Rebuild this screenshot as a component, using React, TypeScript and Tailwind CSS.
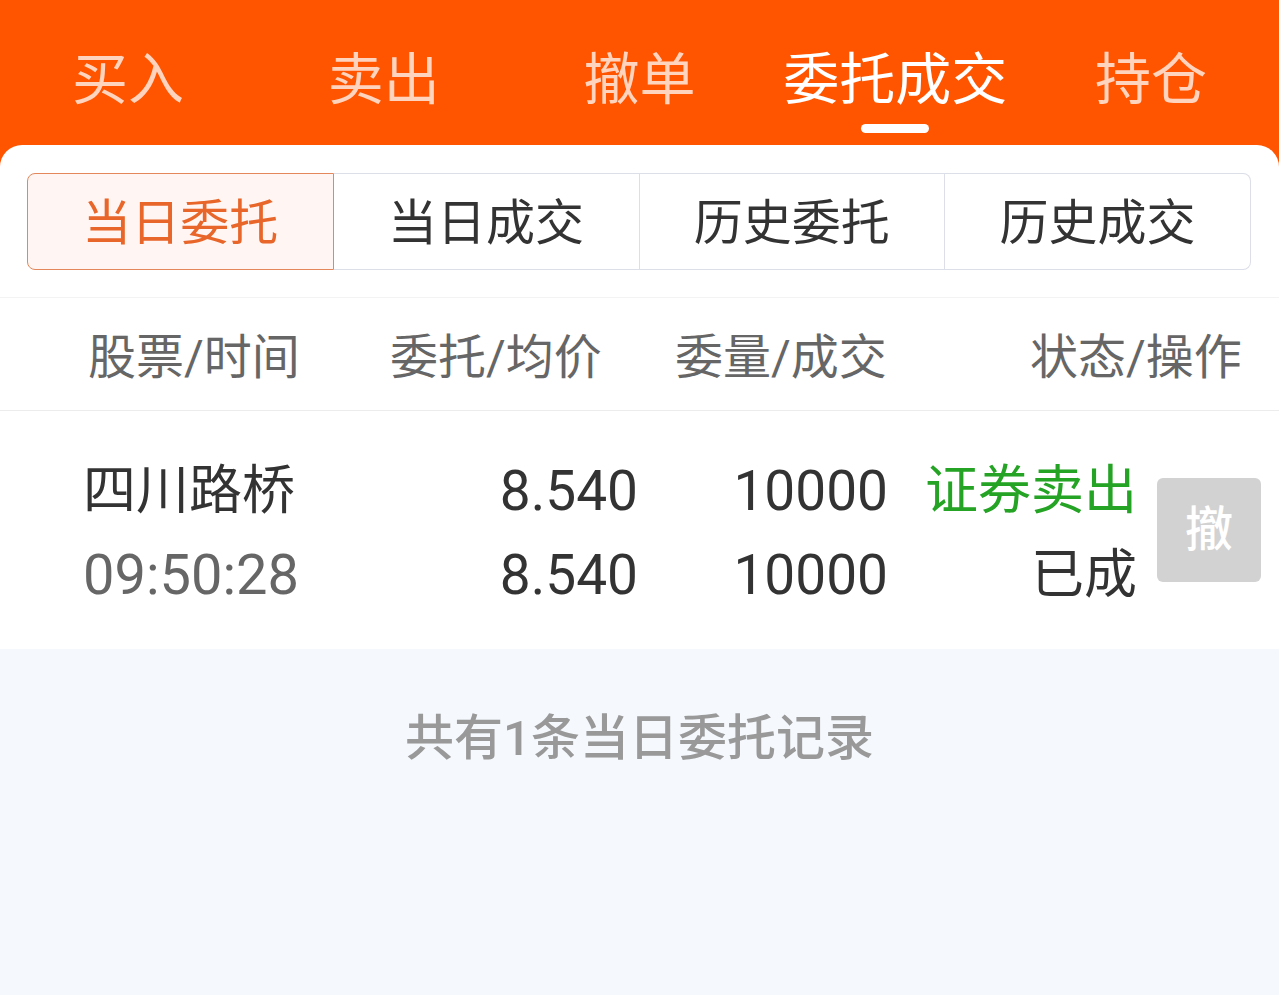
const tabs = ['买入', '卖出', '撤单', '委托成交', '持仓'];
const segments = ['当日委托', '当日成交', '历史委托', '历史成交'];

export default function App() {
  return (
    <div
      className="w-[1279px] h-[995px] overflow-hidden bg-[#f5f9fd]"
      style={{ fontFamily: 'Roboto, "Noto Sans CJK SC", sans-serif' }}
    >
      <div className="bg-[#ff5500]">
        {/* top tabs */}
        <div className="flex h-[145px]">
          {tabs.map((t, i) => (
            <div key={t} className="flex-1 flex flex-col items-center pt-[50px]">
              <span
                className={
                  'text-[56px] leading-[60px] ' +
                  (i === 3 ? 'text-white' : 'text-[#ffd4bf]')
                }
              >
                {t}
              </span>
              {i === 3 && <div className="mt-[14px] h-[9px] w-[68px] rounded-full bg-white" />}
            </div>
          ))}
        </div>

        <div className="bg-white rounded-t-[22px] pt-[28px]">
          {/* segmented control */}
          <div className="flex h-[97px] ml-[27px] mr-[28px]">
            {segments.map((s, i) => (
              <div
                key={s}
                className={
                  'flex-1 flex items-center justify-center pt-[4px] text-[49px] ' +
                  (i === 0
                    ? 'border border-[#e4875a] bg-[#fff6f3] text-[#e8662a] rounded-l-lg'
                    : 'border border-l-0 border-[#dcdee8] text-[#333] ' +
                      (i === 3 ? 'rounded-r-lg' : ''))
                }
              >
                {s}
              </div>
            ))}
          </div>

          {/* table header */}
          <div className="mt-[27px] border-t border-[#f3f3f3] border-b border-b-[#ececec] h-[114px] flex items-center pt-[8px] pl-[88px] text-[48px] text-[#666]">
            <div className="w-[302px]">股票/时间</div>
            <div className="w-[285px]">委托/均价</div>
            <div className="w-[355px]">委量/成交</div>
            <div>状态/操作</div>
          </div>

          {/* data row */}
          <div className="h-[238px] flex items-center pl-[83px] text-[53px] leading-[84px] text-[#333]">
            <div className="w-[300px] pt-[6px]">
              <div>四川路桥</div>
              <div className="text-[#666] text-[56px]">09:50:28</div>
            </div>
            <div className="w-[255px] text-right text-[55px] pt-[6px]">
              <div>8.540</div>
              <div>8.540</div>
            </div>
            <div className="w-[250px] text-right text-[55px] pt-[6px]">
              <div>10000</div>
              <div>10000</div>
            </div>
            <div className="w-[249px] text-right pt-[6px]">
              <div className="text-[#24a324]">证券卖出</div>
              <div>已成</div>
            </div>
            <button className="ml-[20px] w-[104px] h-[104px] rounded-md bg-[#d2d2d2] text-white text-[48px] font-medium flex items-center justify-center">
              撤
            </button>
          </div>
        </div>
      </div>

      {/* footer */}
      <div className="pt-[62px] text-center text-[49px] leading-[56px] text-[#999] font-medium">
        共有1条当日委托记录
      </div>
    </div>
  );
}
